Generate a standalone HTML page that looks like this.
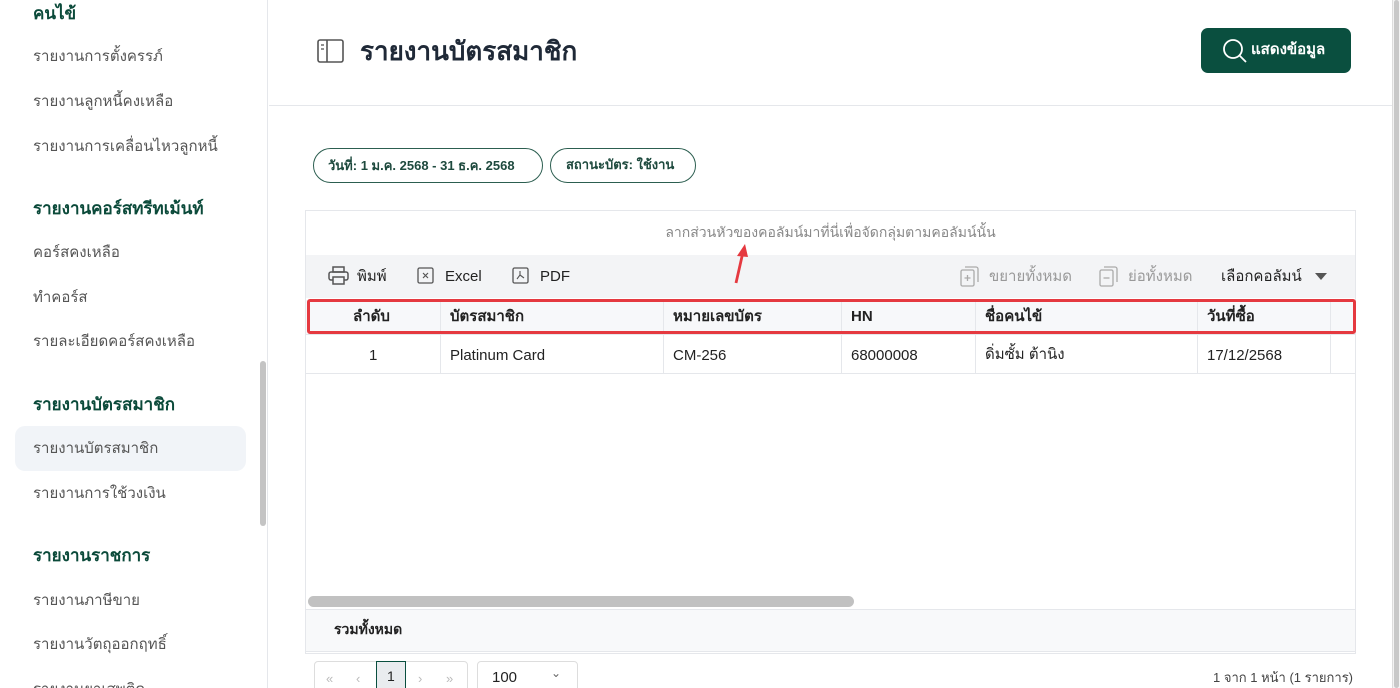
<!DOCTYPE html>
<html><head><meta charset="utf-8"><style>
*{box-sizing:border-box;margin:0;padding:0}
html,body{width:1400px;height:688px;overflow:hidden}
body{background:#fff;font-family:"Liberation Sans","Noto Sans CJK SC",sans-serif;position:relative;color:#222}
.a{position:absolute;white-space:nowrap}
.sb{left:0;top:0;width:268px;height:688px;border-right:1px solid #e5e7eb}
.h{font-weight:bold;color:#0b4a3a;font-size:17px;left:33px}
.it{color:#555;font-size:15px;left:33px}
.th{font-weight:bold;font-size:15px;color:#222;top:304px}
.td{font-size:15px;color:#222;top:347px}
.vl{top:300px;width:1px;height:73px;background:#e5e7eb}
</style></head><body>
<div class="a sb"></div>
<div class="a h" style="top:0px">คนไข้</div>
<div class="a it" style="top:44px">รายงานการตั้งครรภ์</div>
<div class="a it" style="top:89px">รายงานลูกหนี้คงเหลือ</div>
<div class="a it" style="top:134px">รายงานการเคลื่อนไหวลูกหนี้</div>
<div class="a h" style="top:195px">รายงานคอร์สทรีทเม้นท์</div>
<div class="a it" style="top:240px">คอร์สคงเหลือ</div>
<div class="a it" style="top:285px">ทำคอร์ส</div>
<div class="a it" style="top:329px">รายละเอียดคอร์สคงเหลือ</div>
<div class="a h" style="top:391px">รายงานบัตรสมาชิก</div>
<div class="a" style="left:15px;top:426px;width:231px;height:45px;background:#f1f4f8;border-radius:10px"></div>
<div class="a it" style="top:436px">รายงานบัตรสมาชิก</div>
<div class="a it" style="top:481px">รายงานการใช้วงเงิน</div>
<div class="a h" style="top:542px">รายงานราชการ</div>
<div class="a it" style="top:588px">รายงานภาษีขาย</div>
<div class="a it" style="top:632px">รายงานวัตถุออกฤทธิ์</div>
<div class="a it" style="top:677px">รายงานยาเสพติด</div>
<div class="a" style="left:260px;top:361px;width:6px;height:165px;background:#c4c4c4;border-radius:3px"></div>

<div class="a" style="left:269px;top:105px;width:1123px;height:1px;background:#e5e7eb"></div>
<div class="a" style="left:1392px;top:0;width:8px;height:688px;background:#f3f3f3;border-left:1px solid #ddd"></div>
<div class="a" style="left:1394px;top:0;width:5px;height:688px;background:#c8c8c8;border-radius:3px"></div>

<svg class="a" style="left:317px;top:39px" width="28" height="26" viewBox="0 0 28 26"><rect x="1" y="1" width="25" height="22" rx="2" fill="none" stroke="#555" stroke-width="1.6"/><line x1="10" y1="1" x2="10" y2="23" stroke="#555" stroke-width="1.6"/><line x1="4" y1="6" x2="7" y2="6" stroke="#555" stroke-width="1.3"/><line x1="4" y1="10" x2="7" y2="10" stroke="#555" stroke-width="1.3"/></svg>
<div class="a" style="left:360px;top:31px;font-size:26px;font-weight:bold;color:#1f2937">รายงานบัตรสมาชิก</div>
<div class="a" style="left:1201px;top:28px;width:150px;height:45px;background:#0a4f3f;border-radius:7px"></div>
<svg class="a" style="left:1222px;top:38px" width="26" height="26" viewBox="0 0 26 26"><circle cx="11" cy="11" r="9" fill="none" stroke="#fff" stroke-width="1.8"/><line x1="17.5" y1="17.5" x2="24" y2="24" stroke="#fff" stroke-width="1.8"/></svg>
<div class="a" style="left:1251px;top:37px;font-size:15px;font-weight:bold;color:#fff">แสดงข้อมูล</div>

<div class="a" style="left:313px;top:148px;width:230px;height:35px;border:1.5px solid #2c5e50;border-radius:18px"></div>
<div class="a" style="left:328px;top:155px;font-size:13px;font-weight:bold;color:#1e4a3e">วันที่: 1 ม.ค. 2568 - 31 ธ.ค. 2568</div>
<div class="a" style="left:550px;top:148px;width:146px;height:35px;border:1.5px solid #2c5e50;border-radius:18px"></div>
<div class="a" style="left:566px;top:154px;font-size:13px;font-weight:bold;color:#1e4a3e">สถานะบัตร: ใช้งาน</div>

<div class="a" style="left:305px;top:210px;width:1051px;height:444px;border:1px solid #e5e7eb"></div>
<div class="a" style="left:306px;top:222px;width:1049px;text-align:center;font-size:14px;color:#888">ลากส่วนหัวของคอลัมน์มาที่นี่เพื่อจัดกลุ่มตามคอลัมน์นั้น</div>
<div class="a" style="left:306px;top:255px;width:1049px;height:43px;background:#f3f4f6"></div>
<svg class="a" style="left:328px;top:266px" width="22" height="20" viewBox="0 0 22 20"><rect x="5" y="1" width="11" height="5" fill="none" stroke="#555" stroke-width="1.5"/><rect x="1" y="6" width="19" height="8" rx="2" fill="none" stroke="#555" stroke-width="1.5"/><rect x="5" y="11" width="11" height="7" fill="#f3f4f6" stroke="#555" stroke-width="1.5"/></svg>
<div class="a" style="left:357px;top:264px;font-size:15px;color:#222">พิมพ์</div>
<svg class="a" style="left:417px;top:267px" width="18" height="18" viewBox="0 0 18 18"><rect x="1" y="1" width="15" height="15" rx="1.5" fill="none" stroke="#555" stroke-width="1.3"/><path d="M6 6l5 5M11 6l-5 5" stroke="#555" stroke-width="1.2"/></svg>
<div class="a" style="left:445px;top:268px;font-size:15px;color:#222">Excel</div>
<svg class="a" style="left:512px;top:267px" width="18" height="18" viewBox="0 0 18 18"><rect x="1" y="1" width="15" height="15" rx="1.5" fill="none" stroke="#555" stroke-width="1.3"/><path d="M8 4v4l-3 4M8 8l4 3" stroke="#555" stroke-width="1.1" fill="none"/></svg>
<div class="a" style="left:540px;top:268px;font-size:15px;color:#222">PDF</div>
<svg class="a" style="left:960px;top:266px" width="20" height="22" viewBox="0 0 20 22"><rect x="1" y="4" width="13" height="16" rx="1.5" fill="none" stroke="#aaa" stroke-width="1.3"/><path d="M5 1h11a2 2 0 0 1 2 2v13" fill="none" stroke="#aaa" stroke-width="1.3"/><path d="M7.5 9v6M4.5 12h6" stroke="#aaa" stroke-width="1.3"/></svg>
<div class="a" style="left:989px;top:264px;font-size:15px;color:#999">ขยายทั้งหมด</div>
<svg class="a" style="left:1099px;top:266px" width="20" height="22" viewBox="0 0 20 22"><rect x="1" y="4" width="13" height="16" rx="1.5" fill="none" stroke="#aaa" stroke-width="1.3"/><path d="M5 1h11a2 2 0 0 1 2 2v13" fill="none" stroke="#aaa" stroke-width="1.3"/><path d="M4.5 12h6" stroke="#aaa" stroke-width="1.3"/></svg>
<div class="a" style="left:1128px;top:264px;font-size:15px;color:#999">ย่อทั้งหมด</div>
<div class="a" style="left:1221px;top:264px;font-size:15px;color:#222">เลือกคอลัมน์</div>
<svg class="a" style="left:1314px;top:272px" width="14" height="10" viewBox="0 0 14 10"><path d="M1 1h12l-6 7z" fill="#555"/></svg>

<div class="a" style="left:306px;top:300px;width:1049px;height:34px;background:#f7f8fa"></div>
<div class="a" style="left:306px;top:373px;width:1049px;height:1px;background:#e5e7eb"></div>
<div class="a" style="left:306px;top:334px;width:1049px;height:1px;background:#e5e7eb"></div>
<div class="a vl" style="left:440px"></div><div class="a vl" style="left:663px"></div><div class="a vl" style="left:841px"></div><div class="a vl" style="left:975px"></div><div class="a vl" style="left:1197px"></div><div class="a vl" style="left:1330px"></div>
<div class="a th" style="left:353px">ลำดับ</div>
<div class="a th" style="left:450px">บัตรสมาชิก</div>
<div class="a th" style="left:673px">หมายเลขบัตร</div>
<div class="a th" style="left:851px;top:308px">HN</div>
<div class="a th" style="left:985px">ชื่อคนไข้</div>
<div class="a th" style="left:1207px">วันที่ซื้อ</div>
<div class="a td" style="left:369px">1</div>
<div class="a td" style="left:450px">Platinum Card</div>
<div class="a td" style="left:673px">CM-256</div>
<div class="a td" style="left:851px">68000008</div>
<div class="a td" style="left:985px;top:342px">ดิ่มซั้ม ต้านิง</div>
<div class="a td" style="left:1207px">17/12/2568</div>
<div class="a" style="left:307px;top:299px;width:1049px;height:35px;border:3px solid #e53940;border-radius:3px"></div>

<svg class="a" style="left:728px;top:242px" width="24" height="44" viewBox="0 0 24 44"><path d="M8 41L15 10" stroke="#e53940" stroke-width="2.8"/><path d="M17 2L9 14L20 15Z" fill="#e53940"/></svg>

<div class="a" style="left:308px;top:596px;width:546px;height:11px;background:#c1c1c1;border-radius:6px"></div>
<div class="a" style="left:306px;top:609px;width:1049px;height:43px;background:#f8f9fa;border-top:1px solid #e5e7eb;border-bottom:1px solid #e5e7eb"></div>
<div class="a" style="left:334px;top:619px;font-size:14px;font-weight:bold;color:#222">รวมทั้งหมด</div>

<div class="a" style="left:314px;top:661px;width:154px;height:34px;border:1px solid #ddd;border-radius:4px"></div>
<div class="a" style="left:376px;top:661px;width:30px;height:34px;background:#e9ecef;border:1px solid #0a4f3f"></div>
<div class="a" style="left:326px;top:671px;font-size:13px;color:#bbb">«</div>
<div class="a" style="left:356px;top:671px;font-size:13px;color:#bbb">‹</div>
<div class="a" style="left:387px;top:668px;font-size:14px;color:#222">1</div>
<div class="a" style="left:418px;top:671px;font-size:13px;color:#bbb">›</div>
<div class="a" style="left:446px;top:671px;font-size:13px;color:#bbb">»</div>
<div class="a" style="left:477px;top:661px;width:101px;height:34px;border:1px solid #ddd;border-radius:4px"></div>
<div class="a" style="left:492px;top:669px;font-size:15px;color:#222">100</div>
<div class="a" style="left:551px;top:666px;font-size:12px;color:#666">⌄</div>
<div class="a" style="left:1213px;top:667px;font-size:13px;color:#444">1 จาก 1 หน้า (1 รายการ)</div>
</body></html>
